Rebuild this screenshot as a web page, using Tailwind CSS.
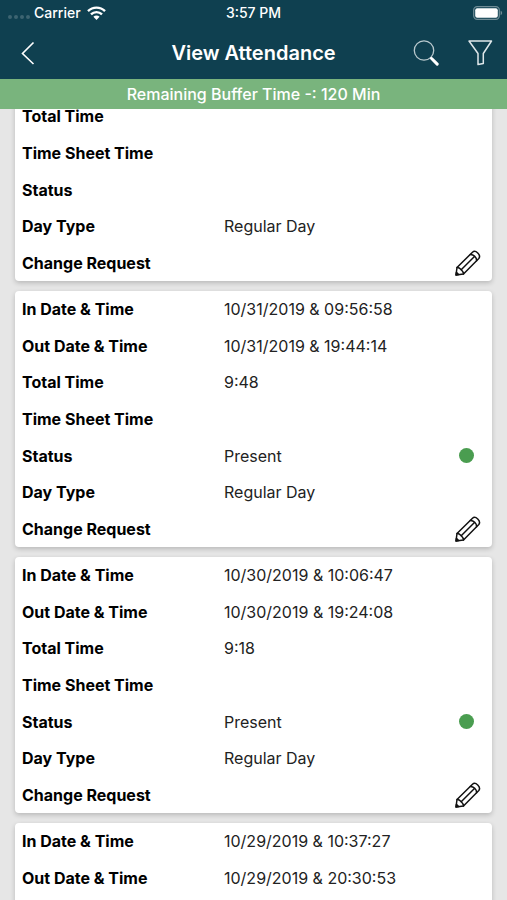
<!DOCTYPE html>
<html lang="en">
<head>
    <meta charset="UTF-8">
    <meta name="viewport" content="width=device-width, initial-scale=1.0">
    <title>View Attendance</title>
    <script src="https://cdn.jsdelivr.net/npm/@tailwindcss/browser@4"></script>
</head>
<body class="h-screen flex flex-col overflow-hidden bg-[#e6e6e6] font-['Inter',sans-serif] text-black">
    <!-- Header -->
    <header class="shrink-0 bg-[#0f4050] text-white">
        <!-- Status bar -->
        <div class="grid grid-cols-3 items-center h-[26px] px-2 text-sm font-medium">
            <div class="flex items-center">
                <span class="flex gap-[2px] pt-2 mr-1">
                    <i class="size-[4px] rounded-full bg-[#3d6471]"></i>
                    <i class="size-[4px] rounded-full bg-[#3d6471]"></i>
                    <i class="size-[4px] rounded-full bg-[#3d6471]"></i>
                    <i class="size-[4px] rounded-full bg-[#3d6471]"></i>
                </span>
                <span class="mr-[6px]">Carrier</span>
                <svg class="w-[19px] h-[14px]" viewBox="0 0 19 14" fill="none" stroke="#fff" stroke-width="2.4">
                    <path d="M1 5.2a12 12 0 0 1 17 0"/>
                    <path d="M4 8.4a7.8 7.8 0 0 1 11 0"/>
                    <path d="M9.500 14 6.400 10.800a4.400 4.400 0 0 1 6.200 0z" fill="#fff" stroke="none"/>
                </svg>
            </div>
            <span class="text-center">3:57 PM</span>
            <svg class="w-[30px] h-[14px] justify-self-end -mr-1" viewBox="0 0 30 14">
                <rect x="0.700" y="0.700" width="25.600" height="12.600" rx="3.500" fill="none" stroke="#6f8c96" stroke-width="1.300"/>
                <rect x="2.200" y="2.200" width="22.600" height="9.600" rx="2" fill="#fff"/>
                <path d="M27.600 4.800c2 .7 2 3.700 0 4.400z" fill="#6f8c96"/>
            </svg>
        </div>

        <!-- Navigation bar -->
        <div class="grid grid-cols-[80px_1fr_80px] items-center h-[53px]">
            <button type="button" aria-label="Back" class="w-[56px] h-[44px] flex items-center justify-center">
                <svg class="size-6" viewBox="0 0 24 24" fill="none" stroke="#fff" stroke-width="1.600">
                    <path d="M17.500 1.500 6.500 12.500 17.500 23"/>
                </svg>
            </button>
            <h1 class="text-center text-xl font-semibold">View Attendance</h1>
            <div class="flex justify-end gap-7 pr-[14px]">
                <button type="button" aria-label="Search">
                    <svg class="size-[26px]" viewBox="0 0 26 26" fill="none" stroke="#fff">
                        <circle cx="11" cy="10.500" r="9.700" stroke="#b9c9ce" stroke-width="1.300"/>
                        <path d="M17.600 17.500 19 19" stroke-width="1.500"/>
                        <path d="m18.600 18.500 5.600 5.600" stroke-width="3" stroke-linecap="round"/>
                    </svg>
                </button>
                <button type="button" aria-label="Filter">
                    <svg class="size-[26px]" viewBox="0 0 26 26" fill="none" stroke="#dfe7ea" stroke-width="1.500" stroke-linejoin="round">
                        <path d="M2 1h22.500L16.300 13.500v10l-5.300 1v-11z"/>
                    </svg>
                </button>
            </div>
        </div>
    </header>

    <p class="shrink-0 h-[30px] leading-[30px] bg-[#79b47d] text-center text-white font-medium">Remaining Buffer Time -: 120 Min</p>

    <!-- Attendance list, opened part way down the newest record -->
    <main class="flex-1 min-h-0 overflow-hidden">
        <div id="attendance-list" class="flex flex-col gap-2.5 px-[15px] -mt-[84px]"></div>
    </main>

    <script>
        const records = [
            { inTime: '', outTime: '', total: '', sheet: '', status: '', dayType: 'Regular Day' },
            { inTime: '10/31/2019 & 09:56:58', outTime: '10/31/2019 & 19:44:14', total: '9:48', sheet: '', status: 'Present', dayType: 'Regular Day' },
            { inTime: '10/30/2019 & 10:06:47', outTime: '10/30/2019 & 19:24:08', total: '9:18', sheet: '', status: 'Present', dayType: 'Regular Day' },
            { inTime: '10/29/2019 & 10:37:27', outTime: '10/29/2019 & 20:30:53', total: '', sheet: '', status: '', dayType: '' }
        ];

        const pencil = `
            <button type="button" aria-label="Change request" class="mr-[11px]">
                <svg class="size-[26px]" viewBox="0 0 26 26" fill="none" stroke="#111" stroke-width="1.500" stroke-linejoin="round" stroke-linecap="round">
                    <path d="M1 25 2 17.500 17.500 2.200C20.500-.6 26.400 5 23.800 8.500L8.500 24z"/>
                    <path d="M2 17.500C4.500 17.200 8.800 21.500 8.500 24"/>
                    <path d="M6.200 19.800 19.700 6.300M15.300 4.400c3.200-.2 6.500 3 6.300 6.300"/>
                    <path d="M1 25l.4-2.600 2.200 2.200z" fill="#111"/>
                </svg>
            </button>`;
        const dot = '<span class="size-[15px] rounded-full bg-[#4a9d50] mr-[18px]"></span>';

        function row(label, value, extra = '') {
            return `
                <div class="grid grid-cols-[202px_1fr_auto] items-center">
                    <dt class="font-bold">${label}</dt>
                    <dd class="text-[#222]">${value}</dd>
                    <dd class="flex">${extra}</dd>
                </div>`;
        }

        document.getElementById('attendance-list').innerHTML = records.map(r => `
            <dl class="shrink-0 min-h-64 grid auto-rows-fr pl-[7px] bg-white rounded-[4px] shadow-[0_2px_5px_rgba(0,0,0,0.2)]">
                ${row('In Date &amp; Time', r.inTime)}
                ${row('Out Date &amp; Time', r.outTime)}
                ${row('Total Time', r.total)}
                ${row('Time Sheet Time', r.sheet)}
                ${row('Status', r.status, r.status ? dot : '')}
                ${row('Day Type', r.dayType)}
                ${row('Change Request', '', pencil)}
            </dl>`).join('');
    </script>
</body>
</html>
